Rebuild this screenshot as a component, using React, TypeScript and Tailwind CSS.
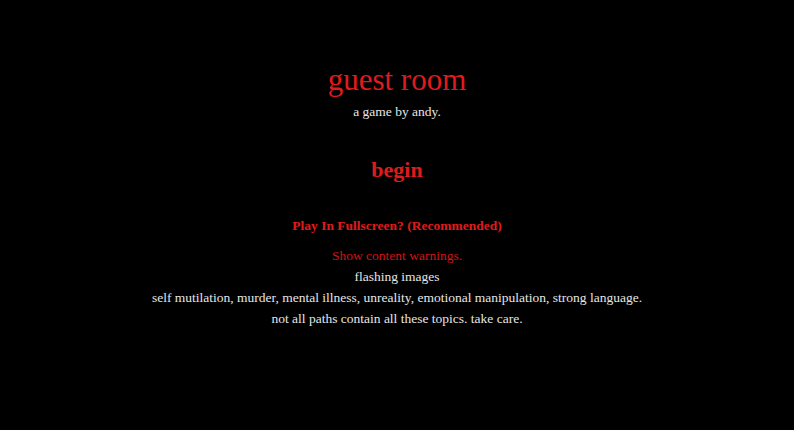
export default function App() {
  return (
    <div
      className="w-[794px] h-[430px] bg-black flex flex-col items-center text-center"
      style={{ fontFamily: '"Liberation Serif", "Times New Roman", serif' }}
    >
      <h1 className="mt-[62px] text-[31px] leading-[36px] text-[#e01b1b] font-normal">guest room</h1>
      <p className="mt-[3px] text-[13.5px] leading-[21px] text-[#e6e6e6]">a game by andy.</p>
      <div className="mt-[35px] text-[22px] leading-[26px] font-bold text-[#e01b1b]">begin</div>
      <div className="mt-[32px] text-[13.5px] leading-[21px] font-bold text-[#e01b1b]">
        Play In Fullscreen? (Recommended)
      </div>
      <div className="mt-[9px] text-[13.5px] leading-[21px] text-[#d01515]">Show content warnings.</div>
      <div className="text-[13.5px] leading-[21px] text-[#e6e6e6]">flashing images</div>
      <div className="text-[13.5px] leading-[21px] text-[#e6e6e6]">
        self mutilation, murder, mental illness, unreality, emotional manipulation, strong language.
      </div>
      <div className="text-[13.5px] leading-[21px] text-[#e6e6e6]">not all paths contain all these topics. take care.</div>
    </div>
  );
}
